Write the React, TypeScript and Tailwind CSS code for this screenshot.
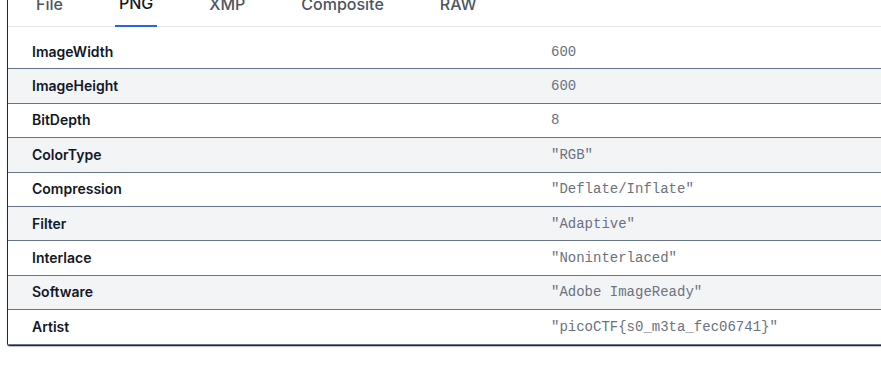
const tabs = ["File", "PNG", "XMP", "Composite", "RAW"];

const rows: [string, string][] = [
  ["ImageWidth", "600"],
  ["ImageHeight", "600"],
  ["BitDepth", "8"],
  ["ColorType", '"RGB"'],
  ["Compression", '"Deflate/Inflate"'],
  ["Filter", '"Adaptive"'],
  ["Interlace", '"Noninterlaced"'],
  ["Software", '"Adobe ImageReady"'],
  ["Artist", '"picoCTF{s0_m3ta_fec06741}"'],
];

export default function App() {
  return (
    <div className="w-[881px] h-[389px] overflow-hidden bg-white font-['Inter',sans-serif]">
      <div className="ml-[7px] -mt-[19px] w-[920px] border-l border-b border-[#1f2937] rounded-bl-[3px] shadow-[0_1px_1px_rgba(0,0,0,0.25)] bg-white">
        {/* tab strip */}
        <div className="flex gap-[48px] pl-6 border-b border-[#e5e7eb]">
          {tabs.map((t) => {
            const active = t === "PNG";
            return (
              <button
                key={t}
                className={
                  active
                    ? "px-1 py-[10px] text-base leading-6 font-medium text-[#111827] border-b-2 border-[#2563eb] -mb-px"
                    : "px-1 py-[10px] text-base leading-6 font-medium text-[#4b5563]"
                }
              >
                {t}
              </button>
            );
          })}
        </div>

        {/* metadata table */}
        <div className="pt-2">
          {rows.map(([k, v], i) => (
            <div
              key={k}
              className={
                i % 2 === 1
                  ? "flex items-center h-[34.4px] border-b border-[#64748b] bg-[#f3f4f6]"
                  : "flex items-center h-[34.4px] border-b border-[#64748b] bg-white"
              }
            >
              <div className="w-[543px] pl-6 text-sm font-semibold text-[#111827]">{k}</div>
              <div className="text-sm text-[#6b7280] font-['Liberation_Mono',monospace]">{v}</div>
            </div>
          ))}
        </div>
      </div>
    </div>
  );
}
